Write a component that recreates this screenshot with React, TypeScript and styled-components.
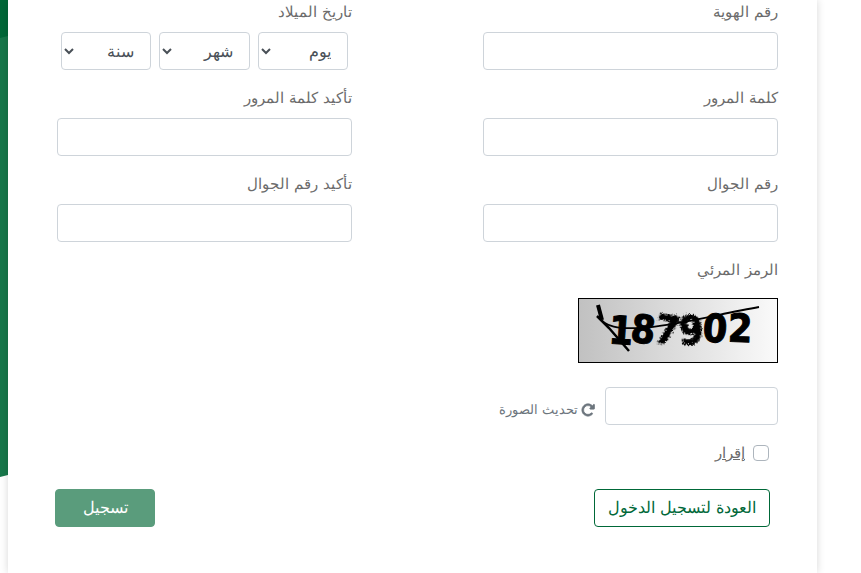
import React from "react";
import styled, { createGlobalStyle } from "styled-components";
import { FaRotateRight } from "react-icons/fa6";

const GlobalStyle = createGlobalStyle`
  *, *::before, *::after { box-sizing: border-box; }
  body {
    margin: 0;
    background: #fff;
    color: #6c6c6c;
    font-family: "DejaVu Sans", sans-serif;
    font-size: 15px;
    font-weight: 200;
    line-height: 24px;
  }
`;

const Page = styled.main`
  position: relative;
  padding: 0 44px 0 8px;
  overflow: hidden;
`;

const Backdrop = styled.svg`
  position: absolute;
  top: 0;
  left: 0;
  width: 8px;
  height: 480px;
`;

const Card = styled.form`
  position: relative;
  min-height: 100vh;
  padding: 0 39px 46px 49px;
  background: #fff;
  box-shadow: 0 0 8px rgba(0, 0, 0, 0.16);
`;

const Fields = styled.div`
  display: grid;
  grid-template-columns: 1fr 1fr;
  column-gap: 131px;
  row-gap: 16px;
`;

const Field = styled.div`
  display: flex;
  flex-direction: column;
  gap: 8px;
  min-width: 0;
`;

const Label = styled.label`
  display: block;
`;

const Group = styled.fieldset`
  min-width: 0;
  margin: 0;
  padding: 0;
  border: 0;
`;

const Legend = styled.legend`
  padding: 0;
  margin-bottom: 8px;
`;

const TextInput = styled.input<{ $width?: string }>`
  width: ${(p) => p.$width ?? "100%"};
  height: 38px;
  padding: 6px 12px;
  border: 1px solid #ced4da;
  border-radius: 4px;
  background: #fff;
  color: #495057;
  font: inherit;
`;

const DateRow = styled.div`
  display: grid;
  grid-template-columns: repeat(3, 1fr);
  gap: 8px;
  padding: 0 4px;
`;

const Select = styled.select`
  min-width: 0;
  height: 38px;
  padding: 6px 12px 6px 0;
  border: 1px solid #ced4da;
  border-radius: 4px;
  background: #fff;
  color: #495057;
  font: inherit;
  font-size: 16px;
`;

const CaptchaImage = styled.svg`
  display: block;
  width: 200px;
  height: 65px;
  margin: 8px 0 16px;
  border: 1px solid #000;
`;

const CaptchaRow = styled.div`
  display: flex;
  align-items: center;
  gap: 10px;
`;

const RefreshButton = styled.button`
  display: flex;
  align-items: center;
  gap: 3px;
  padding: 8px 0 0;
  border: 0;
  background: none;
  color: #6c757d;
  font: inherit;
  font-size: 13px;
`;

const RefreshIcon = styled(FaRotateRight)`
  stroke: currentColor;
  stroke-width: 24px;
`;

const Agreement = styled.div`
  display: flex;
  align-items: center;
  gap: 8px;
  margin-top: 16px;
  padding-right: 9px;
`;

const Checkbox = styled.input`
  appearance: none;
  width: 16px;
  height: 16px;
  margin: 0;
  border: 1px solid #adb5bd;
  border-radius: 4px;
  background: #fff;
  &:checked { background: #006838; }
`;

const AgreementLink = styled.a`
  color: #6c6c6c;
  text-decoration: underline;
`;

const Actions = styled.div`
  display: flex;
  justify-content: space-between;
  margin: 24px 8px 0 -2px;
`;

const Button = styled.button<{ $primary?: boolean }>`
  height: 38px;
  min-width: ${(p) => (p.$primary ? "100px" : "176px")};
  padding: 0 12px;
  border: 1px solid ${(p) => (p.$primary ? "#5a9c7c" : "#006838")};
  border-radius: 4px;
  background: ${(p) => (p.$primary ? "#5a9c7c" : "#fff")};
  color: ${(p) => (p.$primary ? "#fff" : "#006838")};
  font: inherit;
  font-size: 16px;
  white-space: nowrap;
`;

const TextField = ({ id, label, type = "text" }: { id: string; label: string; type?: string }) => (
  <Field>
    <Label htmlFor={id}>{label}</Label>
    <TextInput id={id} type={type} />
  </Field>
);

const digits = [
  { char: "1", x: 30, y: 45, turn: 4 },
  { char: "8", x: 52, y: 44, turn: 7 },
  { char: "7", x: 76, y: 45, turn: 10 },
  { char: "9", x: 100, y: 45, turn: -4 },
  { char: "0", x: 124, y: 43, turn: 5 },
  { char: "2", x: 149, y: 43, turn: 2 },
];

const Captcha = () => (
  <CaptchaImage viewBox="0 0 198 63" role="img" aria-label="الرمز المرئي">
    <defs>
      <linearGradient id="shade" x1="0" x2="1" y1="0" y2="0">
        <stop offset="0" stopColor="#c1c1c1" />
        <stop offset="1" stopColor="#fafafa" />
      </linearGradient>
      <filter id="rough" x="-20%" y="-10%" width="140%" height="120%">
        <feTurbulence type="fractalNoise" baseFrequency="0.9" numOctaves="1" seed="4" result="noise" />
        <feDisplacementMap
          in="SourceGraphic"
          in2="noise"
          scale="7"
          xChannelSelector="R"
          yChannelSelector="G"
        />
      </filter>
    </defs>
    <rect width="198" height="63" fill="url(#shade)" />
    <g
      fontFamily="DejaVu Sans Condensed, DejaVu Sans"
      fontWeight="700"
      fontSize="39"
      direction="ltr"
      stroke="#000"
      strokeWidth="1"
    >
      {digits.map((d) => (
        <text
          key={d.char}
          x={d.x}
          y={d.y}
          transform={`rotate(${d.turn} ${d.x + 12} ${d.y - 14})`}
          filter={d.char === "7" || d.char === "9" ? "url(#rough)" : undefined}
        >
          {d.char}
        </text>
      ))}
    </g>
    <g fill="none" stroke="#000">
      <path d="M19 6l4 15" strokeWidth="4" />
      <path d="M18 17l12 12 20 23" strokeWidth="2.5" />
      <path d="M19 18c8 10 20 12 42 11C95 27 140 15 180 8" strokeWidth="1.8" />
    </g>
  </CaptchaImage>
);

export default function App() {
  return (
    <>
      <GlobalStyle />
      <Page dir="rtl" lang="ar">
        <Backdrop viewBox="0 0 8 480" aria-hidden="true">
          <path d="M0 0h8v475l-8 2z" fill="#17774a" />
          <path d="M0 0h8v36l-8 2z" fill="#006838" />
        </Backdrop>
        <Card onSubmit={(e) => e.preventDefault()}>
          <Fields>
            <TextField id="identity" label="رقم الهوية" />
            <Group>
              <Legend>تاريخ الميلاد</Legend>
              <DateRow>
                {["يوم", "شهر", "سنة"].map((part) => (
                  <Select key={part} aria-label={part}>
                    <option>{part}</option>
                  </Select>
                ))}
              </DateRow>
            </Group>
            <TextField id="password" type="password" label="كلمة المرور" />
            <TextField id="password-confirm" type="password" label="تأكيد كلمة المرور" />
            <TextField id="mobile" type="tel" label="رقم الجوال" />
            <TextField id="mobile-confirm" type="tel" label="تأكيد رقم الجوال" />
            <Field>
              <Label htmlFor="captcha">الرمز المرئي</Label>
              <Captcha />
              <CaptchaRow>
                <TextInput id="captcha" $width="173px" />
                <RefreshButton type="button">
                  <RefreshIcon size={14} />
                  تحديث الصورة
                </RefreshButton>
              </CaptchaRow>
            </Field>
          </Fields>
          <Agreement>
            <Checkbox id="agree" type="checkbox" aria-labelledby="agree-link" />
            <AgreementLink id="agree-link" href="#">إقرار</AgreementLink>
          </Agreement>
          <Actions>
            <Button type="button">العودة لتسجيل الدخول</Button>
            <Button type="submit" $primary>تسجيل</Button>
          </Actions>
        </Card>
      </Page>
    </>
  );
}
